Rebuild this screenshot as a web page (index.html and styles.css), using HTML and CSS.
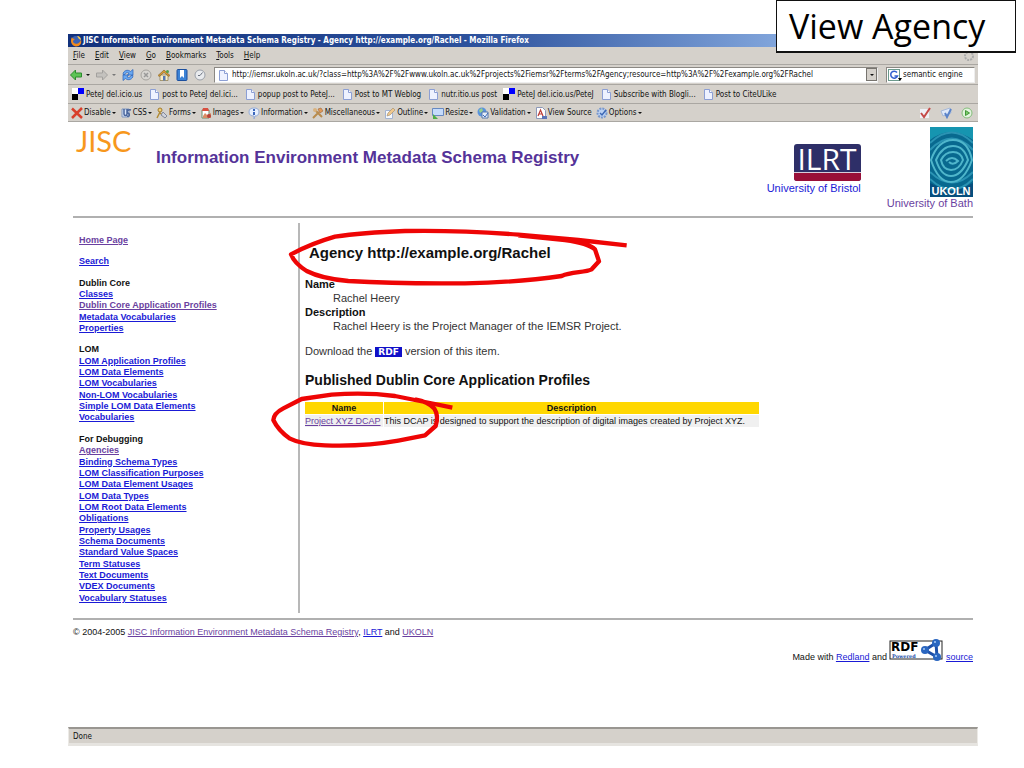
FILE: index.html
```html
<!DOCTYPE html>
<html lang="en">
<head>
  <meta charset="UTF-8" />
  <meta name="viewport" content="width=device-width, initial-scale=1" />
  <title>View Agency</title>
  <link rel="stylesheet" href="styles.css">
</head>
<body>

  <svg class="defs" aria-hidden="true">
    <symbol id="page" viewBox="0 0 12 12">
      <path d="M2.5 1.5h5l3 3v7h-8z" fill="#eef2ff" stroke="#8c9fd4"/>
      <path d="M7.5 1.5v3h3" fill="#fff" stroke="#8c9fd4"/>
    </symbol>
    <symbol id="delicious" viewBox="0 0 12 12">
      <path d="M0 0h6v6H0z" fill="#fff"/><path d="M6 0h6v6H6z" fill="#00f"/>
      <path d="M0 6h6v6H0z" fill="#000"/><path d="M6 6h6v6H6z" fill="#d5d1cb"/>
    </symbol>
  </svg>

  <div class="window">
    <div class="title-bar">
      <svg class="icon" viewBox="0 0 12 12"><circle cx="6" cy="6" r="5" fill="#3b62b5"/><path d="M2 2C0 5 1 11 6 11.500c4 0 6-3 5-7-1 3-3 5-6 4S3 5 5 4C3 4 2 3 2 2z" fill="#f28a1c"/><path d="M7 1c3 0 4 2 4 4L9 4z" fill="#f7c64a"/></svg>
      <span>JISC Information Environment Metadata Schema Registry - Agency http://example.org/Rachel - Mozilla Firefox</span>
    </div>

    <div class="menu-bar">
      <button type="button"><u>F</u>ile</button>
      <button type="button"><u>E</u>dit</button>
      <button type="button"><u>V</u>iew</button>
      <button type="button"><u>G</u>o</button>
      <button type="button"><u>B</u>ookmarks</button>
      <button type="button"><u>T</u>ools</button>
      <button type="button"><u>H</u>elp</button>
      <svg class="icon throbber" viewBox="0 0 12 12"><circle cx="6" cy="6" r="4" fill="none" stroke="#aaa" stroke-width="2" stroke-dasharray="2 1"/></svg>
    </div>

    <div class="nav-bar">
      <div class="nav-buttons">
        <button type="button" class="with-arrow" aria-label="Back"><svg class="icon" viewBox="0 0 12 12"><path d="M.5 6l5-5v3h6v4h-6v3z" fill="#5cc454" stroke="#2c8b2d"/></svg><i class="arrow"></i></button>
        <button type="button" class="with-arrow" aria-label="Forward"><svg class="icon" viewBox="0 0 12 12"><path d="M11.500 6l-5-5v3h-6v4h6v3z" fill="#c4c2be" stroke="#a3a19e"/></svg><i class="arrow dim"></i></button>
        <button type="button" aria-label="Reload"><svg class="icon" viewBox="0 0 12 12"><path d="M1 5.500C1 1.500 6 0 8.500 2.500L11 .5V6H5.500l1.500-2C5 3 3.500 4 3 5.500zM11 6.500c0 4-5 5.500-7.500 3L1 11.500V6h5.500L5 8c2 1 3.500 0 4-1.500z" fill="#6aa8f0" stroke="#2861ba" stroke-width=".7"/></svg></button>
        <button type="button" aria-label="Stop"><svg class="icon" viewBox="0 0 12 12"><circle cx="6" cy="6" r="5" fill="#d8d6d2" stroke="#a5a39f"/><path d="M4 4l4 4M8 4l-4 4" stroke="#999" stroke-width="1.500"/></svg></button>
        <button type="button" aria-label="Home"><svg class="icon" viewBox="0 0 12 12"><path d="M2 6v5.500h8V6z" fill="#f7edc9" stroke="#8b7a4a" stroke-width=".7"/><path d="M0 6.500L6 1l6 5.500-1 1-5-4-5 4z" fill="#d99c35" stroke="#7b5a20" stroke-width=".6"/><path d="M5 7h2.500v4.500H5z" fill="#5578b5"/><circle cx="9.500" cy="2.500" r="1.500" fill="#55a14c"/></svg></button>
        <button type="button" aria-label="Bookmarks"><svg class="icon" viewBox="0 0 12 12"><rect x="1" y=".5" width="10" height="11" rx="1" fill="#3c83d6" stroke="#1c4f9e"/><path d="M4 1h4v8L6 7 4 9z" fill="#fff"/></svg></button>
        <button type="button" aria-label="History"><svg class="icon" viewBox="0 0 12 12"><circle cx="6" cy="6" r="5" fill="#e9ebee" stroke="#9a9fa8"/><path d="M6 6.500L8.500 3.500M6 6.500H4" stroke="#6b7280" fill="none"/></svg></button>
      </div>
      <div class="address">
        <svg class="icon"><use href="#page"/></svg>
        <input type="text" aria-label="Address" value="http://iemsr.ukoln.ac.uk/?class=http%3A%2F%2Fwww.ukoln.ac.uk%2Fprojects%2Fiemsr%2Fterms%2FAgency;resource=http%3A%2F%2Fexample.org%2FRachel">
        <button type="button" class="drop" aria-label="Show history"><i class="arrow"></i></button>
      </div>
      <div class="search">
        <svg class="search-logo" viewBox="0 0 14 12"><rect x=".5" y=".5" width="11" height="11" fill="#fff" stroke="#6c9a8c"/><path d="M9 3.500A3.500 3.500 0 1 0 9.500 7H6.500" fill="none" stroke="#3460cf" stroke-width="1.500"/><path d="M10 9h4l-2 3z" fill="#000"/></svg>
        <input type="text" aria-label="Search" value="semantic engine">
      </div>
    </div>

    <div class="bookmark-bar">
      <a href="#"><svg class="icon"><use href="#delicious"/></svg>PeteJ del.icio.us</a>
      <a href="#"><svg class="icon"><use href="#page"/></svg>post to PeteJ del.ici...</a>
      <a href="#"><svg class="icon"><use href="#page"/></svg>popup post to PeteJ...</a>
      <a href="#"><svg class="icon"><use href="#page"/></svg>Post to MT Weblog</a>
      <a href="#"><svg class="icon"><use href="#page"/></svg>nutr.itio.us post</a>
      <a href="#"><svg class="icon"><use href="#delicious"/></svg>PeteJ del.icio.us/PeteJ</a>
      <a href="#"><svg class="icon"><use href="#page"/></svg>Subscribe with Blogli...</a>
      <a href="#"><svg class="icon"><use href="#page"/></svg>Post to CiteULike</a>
    </div>

    <div class="dev-bar">
      <button type="button"><svg class="icon" viewBox="0 0 12 12"><path d="M1 1.500l10 9.500M11 1L1 11" stroke="#d8402c" stroke-width="2.500"/></svg>Disable<i class="arrow"></i></button>
      <button type="button"><svg class="icon" viewBox="0 0 12 12"><path d="M2 2h7v8H2z" fill="#dbe6f8" stroke="#7d94bd"/><path d="M4 2v5c0 2 3 2 3 0V2M7 9c3 1 3-2 1-3s0-4 3-3" fill="none" stroke="#4a669c" stroke-width="1.500"/></svg>CSS<i class="arrow"></i></button>
      <button type="button"><svg class="icon" viewBox="0 0 12 12"><circle cx="4" cy="3" r="2" fill="#f2cf77" stroke="#a07a2d"/><path d="M4 5l-3 6M4 6l5 4" stroke="#b28b34" stroke-width="1.500"/><path d="M7 5l4 4-2 2-4-3z" fill="#cfd3dd" stroke="#84899a"/></svg>Forms<i class="arrow"></i></button>
      <button type="button"><svg class="icon" viewBox="0 0 12 12"><path d="M2 3h7v8H2z" fill="#fff" stroke="#6d8e6d"/><path d="M3 1h5l1 3H2z" fill="#d95040"/><path d="M3 9l2-3 2 2 4-2v5H3z" fill="#d98e65"/><circle cx="9" cy="9" r="2" fill="#b8423a"/></svg>Images<i class="arrow"></i></button>
      <button type="button"><svg class="icon" viewBox="0 0 12 12"><path d="M6 1c3 0 5 1 5 4S9 9 7 9l-1 3V9C3 9 1 8 1 5s2-4 5-4z" fill="#e6effd" stroke="#94abd6"/><path d="M6 2v2M6 5v3" stroke="#3c68bd" stroke-width="2"/></svg>Information<i class="arrow"></i></button>
      <button type="button"><svg class="icon" viewBox="0 0 12 12"><path d="M1 11l6-6M3 3l7 7" stroke="#b88b4d" stroke-width="2"/><path d="M6 2l3-1 2 3-3 2z" fill="#e29a58" stroke="#9c663a" stroke-width=".6"/><circle cx="3" cy="3" r="2" fill="#d8b380"/></svg>Miscellaneous<i class="arrow"></i></button>
      <button type="button"><svg class="icon" viewBox="0 0 12 12"><path d="M1.500 3.500h7v8h-7z" fill="#f5f8fd" stroke="#a2b3d1"/><path d="M3 9l1-3 5-5 2 2-5 5z" fill="#f0c88e" stroke="#a99372" stroke-width=".7"/></svg>Outline<i class="arrow"></i></button>
      <button type="button"><svg class="icon" viewBox="0 0 12 12"><path d="M.5 1.500h11v7H.5z" fill="#c5dbfb" stroke="#6789c1"/><path d="M1 12V7l5 5z" fill="#4dae46"/></svg>Resize<i class="arrow"></i></button>
      <button type="button"><svg class="icon" viewBox="0 0 12 12"><circle cx="5" cy="5" r="4.500" fill="#5a93dd"/><path d="M2 3l3-2 1 3-3 2z" fill="#9ad089"/><path d="M5 5h6v6H5z" fill="#e6edf9" stroke="#5979aa"/><path d="M6 8l2 2 3-4" stroke="#3b68b5" fill="none"/></svg>Validation<i class="arrow"></i></button>
      <button type="button"><svg class="icon" viewBox="0 0 12 12"><path d="M1.500.5h6l3 3v8h-9z" fill="#fff" stroke="#8b98b8"/><path d="M3 9l2.500-6L8 9M4 7h3" fill="none" stroke="#bb3c36" stroke-width="1.200"/><path d="M7 9h5v3H7z" fill="#5a74b8"/></svg>View Source</button>
      <button type="button"><svg class="icon" viewBox="0 0 12 12"><circle cx="6" cy="6" r="4.500" fill="#bcd2f3" stroke="#7897cc" stroke-width="2" stroke-dasharray="2 1"/><path d="M4 6l2 2 4-5" fill="none" stroke="#3c67b4" stroke-width="1.500"/></svg>Options<i class="arrow"></i></button>
      <span class="dev-status">
        <svg class="icon" viewBox="0 0 12 12"><path d="M1 2h9v9H1z" fill="#eef0f6"/><path d="M2 6l3 4 6-9" fill="none" stroke="#c44a48" stroke-width="2"/></svg>
        <svg class="icon" viewBox="0 0 12 12"><path d="M1 4l9-3 1 5-8 3z" fill="#dfe9f9" stroke="#a5b8d8"/><path d="M5 6l2 4 4-8" fill="none" stroke="#5b83c9" stroke-width="2"/></svg>
        <svg class="icon" viewBox="0 0 12 12"><circle cx="6" cy="6" r="5" fill="#e3f4df" stroke="#84bd7b"/><path d="M4.500 3.500l4 2.500-4 2.500z" fill="#7dce6e" stroke="#429738"/></svg>
      </span>
    </div>

    <div class="page">
      <header class="site-header">
        <div class="jisc">JISC</div>
        <h1>Information Environment Metadata Schema Registry</h1>
        <a class="partner bristol" href="#">
          <svg width="67" height="38" viewBox="0 0 67 38">
            <rect width="67" height="37" rx="3" fill="#2e2f68"/>
            <path d="M0 29h67v5q0 3-3 3H3q-3 0-3-3z" fill="#990f38"/>
            <path d="M0 28.500h67" stroke="#d8cddb"/>
            <text x="33" y="26" text-anchor="middle" class="ilrt-text">ILRT</text>
          </svg>
          University of Bristol
        </a>
        <a class="partner bath visited" href="#">
          <svg width="43" height="70" viewBox="0 0 43 70">
            <rect width="43" height="70" fill="#08698f"/>
            <path d="M0 0h43v13Q21-3 0 13z" fill="#1695b0"/>
            <path d="M0 56q22 12 43 0v14H0z" fill="#064e7d"/>
            <g fill="none" stroke="#4fb6cb" stroke-width="2">
              <path d="M0 16Q22-5 43 16M0 23Q22 0 43 23M0 45Q22 66 43 45M0 52Q22 73 43 52" stroke="#2a93b3"/>
              <path d="M1 33Q8 13 23 13t19 20Q34 55 21 55T1 33z"/>
              <path d="M6 33Q12 19 23 19t15 14Q31 49 21 49T6 33z"/>
              <path d="M11 33Q15 25 23 25t10 8Q29 43 21 43T11 33z"/>
              <path d="M16 34q6-6 12 0-5 5-9 1"/>
            </g>
            <text x="21" y="68" text-anchor="middle" class="ukoln-text">UKOLN</text>
          </svg>
          University of Bath
        </a>
      </header>

      <div class="layout">
        <nav class="sidebar">
          <ul>
            <li><a class="visited" href="#">Home Page</a></li>
            <li class="first"><a href="#">Search</a></li>
            <li class="first">Dublin Core</li>
            <li><a href="#">Classes</a></li>
            <li><a class="visited" href="#">Dublin Core Application Profiles</a></li>
            <li><a href="#">Metadata Vocabularies</a></li>
            <li><a href="#">Properties</a></li>
            <li class="first">LOM</li>
            <li><a href="#">LOM Application Profiles</a></li>
            <li><a href="#">LOM Data Elements</a></li>
            <li><a href="#">LOM Vocabularies</a></li>
            <li><a href="#">Non-LOM Vocabularies</a></li>
            <li><a href="#">Simple LOM Data Elements</a></li>
            <li><a href="#">Vocabularies</a></li>
            <li class="first">For Debugging</li>
            <li><a class="visited" href="#">Agencies</a></li>
            <li><a href="#">Binding Schema Types</a></li>
            <li><a href="#">LOM Classification Purposes</a></li>
            <li><a href="#">LOM Data Element Usages</a></li>
            <li><a href="#">LOM Data Types</a></li>
            <li><a href="#">LOM Root Data Elements</a></li>
            <li><a href="#">Obligations</a></li>
            <li><a href="#">Property Usages</a></li>
            <li><a href="#">Schema Documents</a></li>
            <li><a href="#">Standard Value Spaces</a></li>
            <li><a href="#">Term Statuses</a></li>
            <li><a href="#">Text Documents</a></li>
            <li><a href="#">VDEX Documents</a></li>
            <li><a href="#">Vocabulary Statuses</a></li>
          </ul>
        </nav>

        <main class="content">
          <h2>Agency http://example.org/Rachel</h2>
          <dl>
            <dt>Name</dt>
            <dd>Rachel Heery</dd>
            <dt>Description</dt>
            <dd>Rachel Heery is the Project Manager of the IEMSR Project.</dd>
          </dl>
          <p>Download the <a class="rdf-badge" href="#">RDF</a> version of this item.</p>
          <h3>Published Dublin Core Application Profiles</h3>
          <table>
            <thead>
              <tr><th class="name-col">Name</th><th>Description</th></tr>
            </thead>
            <tbody>
              <tr>
                <td><a class="visited" href="#">Project XYZ DCAP</a></td>
                <td>This DCAP is designed to support the description of digital images created by Project XYZ.</td>
              </tr>
            </tbody>
          </table>
        </main>

        <!-- hand drawn rings around the heading and the table link -->
        <svg class="rings" viewBox="0 0 1140 720" aria-hidden="true">
          <path d="M1085 76L940 60 760 44Q580 30 420 33 290 38 210 50 140 70 78 103 88 130 125 153 170 176 250 183 400 192 600 190 760 187 890 168C920 155 960 158 980 148L1002 124 990 88Q970 70 900 60L760 46"/>
          <path d="M562 563L480 546 390 528Q300 516 200 524L110 537 55 565Q26 580 25 600 40 632 75 656 110 674 180 676 300 680 400 662L480 646 512 618Q522 588 508 566 490 545 450 538"/>
        </svg>
      </div>

      <footer class="site-footer">
        <div>© 2004-2005 <a class="visited" href="#">JISC Information Environment Metadata Schema Registry</a>, <a href="#">ILRT</a> and <a class="visited" href="#">UKOLN</a></div>
        <div class="made-with">
          Made with <a href="#">Redland</a> and
          <svg width="54" height="24" viewBox="0 0 54 24">
            <rect x="1" y="3" width="52" height="18" fill="#fff" stroke="#222"/>
            <text x="2" y="13" class="rdf-text">RDF</text>
            <text x="3" y="20" class="powered-text">Powered</text>
            <path d="M47 5L36 12l12 7z" fill="none" stroke="#1d4fa8" stroke-width="3"/>
            <g fill="#2a66c0"><circle cx="47" cy="5" r="4"/><circle cx="36" cy="12" r="4"/><circle cx="48" cy="19" r="4"/></g>
            <g fill="#a9cdf7"><circle cx="46" cy="4" r="1"/><circle cx="35" cy="11" r="1"/><circle cx="47" cy="18" r="1"/></g>
          </svg>
          <a href="#">source</a>
        </div>
      </footer>
    </div>

    <div class="status-bar">Done</div>
  </div>

  <div class="slide-label">View Agency</div>

</body>
</html>
```
FILE: styles.css
```css
* {
  box-sizing: border-box;
  margin: 0;
  padding: 0;
}

body {
  font-family: "Liberation Sans", Arial, sans-serif;
  background: #fff;
  color: #111;
  padding: 34px 46px 22px 68px;
}

.defs {
  position: absolute;
  width: 0;
  height: 0;
}

a {
  color: #1a1ad6;
}

a.visited {
  color: #6a3fa0;
}

ul {
  list-style: none;
}

.icon {
  width: 12px;
  height: 12px;
  flex: none;
}

.arrow {
  border: 2px solid transparent;
  border-top-color: #111;
  border-bottom: 0;
}

.arrow.dim {
  border-top-color: #777;
}

/* browser window */
.window {
  background: #d5d1cb;
  font-size: 8px;
}

.window button,
.window input {
  font-family: "DejaVu Sans Condensed", "DejaVu Sans", sans-serif;
  font-size: 8px;
  border: none;
  background: none;
  color: #111;
}

.title-bar,
.menu-bar,
.nav-bar,
.bookmark-bar,
.dev-bar,
.status-bar {
  display: flex;
  align-items: center;
  white-space: nowrap;
  font-family: "DejaVu Sans Condensed", "DejaVu Sans", sans-serif;
}

.title-bar {
  height: 13px;
  padding-left: 2px;
  gap: 1px;
  background: linear-gradient(to right, #12317c, #2d529d 45%, #86aadf 80%, #a0c0ea);
  color: #fff;
  font-weight: bold;
}

.menu-bar {
  height: 17px;
  padding: 0 3px 0 5px;
  gap: 10px;
}

.throbber {
  margin-left: auto;
}

.nav-bar {
  height: 20px;
  padding: 0 3px 0 2px;
  gap: 8px;
  border-top: 1px solid #aaa7a2;
}

.nav-buttons {
  display: flex;
  align-items: center;
  gap: 6px;
}

.nav-buttons button {
  display: flex;
  align-items: center;
}

.with-arrow {
  gap: 4px;
}

.address,
.search {
  display: flex;
  align-items: center;
  height: 16px;
  background: #fff;
  border: 1px solid #8b8883;
  border-right-color: #eee;
  border-bottom-color: #eee;
}

.address {
  flex: 1;
  padding-left: 2px;
  gap: 3px;
}

.address input,
.search input {
  flex: 1;
  min-width: 0;
  outline: none;
}

.drop {
  width: 11px;
  height: 13px;
  display: flex;
  align-items: center;
  justify-content: center;
}

.window .drop {
  background: #d5d1cb;
  border: 1px solid #77746f;
}

.search {
  width: 89px;
  padding-left: 1px;
  gap: 1px;
}

.search-logo {
  width: 14px;
  height: 12px;
  flex: none;
}

.bookmark-bar {
  height: 19px;
  padding-left: 4px;
  gap: 6px;
  border-top: 1px solid #aaa7a2;
}

.bookmark-bar a {
  display: flex;
  align-items: center;
  gap: 2px;
  color: #111;
  text-decoration: none;
}

.dev-bar {
  height: 19px;
  padding: 0 5px 0 3px;
  gap: 4px;
  border-top: 1px solid #aaa7a2;
  border-bottom: 1px solid #aaa7a2;
}

.dev-bar button {
  display: flex;
  align-items: center;
  gap: 1px;
}

.dev-status {
  display: flex;
  gap: 9px;
  margin-left: auto;
}

.status-bar {
  height: 19px;
  padding-left: 4px;
  border: 1px solid #eceae6;
  border-top: 2px solid #999691;
  border-bottom: 3px solid #e6e4e0;
}

/* registry site */
.page {
  background: #fff;
  padding: 0 5px;
  min-height: 605px;
}

.site-header {
  display: flex;
  align-items: flex-start;
  height: 96px;
  border-bottom: 2px solid #b0b0b0;
}

.jisc {
  width: 83px;
  padding-left: 3px;
  font-family: Lato, sans-serif;
  font-size: 29px;
  line-height: 38px;
  color: #f7981d;
}

h1 {
  flex: 1;
  padding-top: 26px;
  font-size: 17px;
  line-height: 20px;
  color: #553399;
  white-space: nowrap;
}

.partner {
  display: flex;
  flex-direction: column;
  align-items: flex-end;
  font-size: 11px;
  line-height: 12px;
  text-decoration: none;
  white-space: nowrap;
}

.bristol {
  padding-top: 22px;
  margin-right: 26px;
}

.bath {
  padding-top: 5px;
}

.ilrt-text {
  font-family: "Open Sans", sans-serif;
  font-size: 30px;
  fill: #fff;
}

.ukoln-text {
  font-size: 11px;
  font-weight: bold;
  fill: #fff;
}

.layout {
  position: relative;
  display: flex;
  min-height: 390px;
  margin-top: 5px;
}

.sidebar {
  display: flex;
  width: 227px;
  padding: 12px 6px 9px;
  border-right: 2px solid #b8b8b8;
  font-size: 9px;
  font-weight: bold;
  line-height: 11px;
}

.sidebar ul {
  display: flex;
  flex-direction: column;
  justify-content: space-between;
}

.sidebar .first {
  padding-top: 10px;
}

.content {
  flex: 1;
  padding: 20px 5px 0;
  font-size: 11px;
  line-height: 14px;
}

h2 {
  margin: 0 0 14px 4px;
  font-size: 15px;
  line-height: 20px;
}

dt {
  font-weight: bold;
}

dd,
.content p {
  color: #333;
}

dd {
  margin-left: 28px;
}

.content p {
  margin: 11px 0 12px;
}

.rdf-badge {
  display: inline-block;
  padding: 0 3px;
  background: #1010c8;
  color: #fff;
  font: bold 9px/10px "DejaVu Sans", sans-serif;
  text-decoration: none;
}

h3 {
  margin-bottom: 11px;
  font-size: 14px;
  line-height: 20px;
}

table {
  width: 456px;
  border-spacing: 1px;
  margin-left: -1px;
  font-size: 9px;
  line-height: 12px;
  white-space: nowrap;
}

.name-col {
  width: 78px;
}

th {
  background: #ffd700;
}

td {
  background: #f0f0f0;
}

.rings {
  position: absolute;
  left: 192px;
  top: -3px;
  width: 380px;
  height: 240px;
  fill: none;
  stroke: #ee0505;
  stroke-width: 13;
  stroke-linejoin: round;
  pointer-events: none;
}

.site-footer {
  margin-top: 5px;
  padding-top: 6px;
  border-top: 2px solid #b0b0b0;
  font-size: 9px;
  line-height: 12px;
}

.made-with {
  text-align: right;
}

.made-with svg {
  vertical-align: -2px;
}

.rdf-text {
  font: bold 12px "DejaVu Sans", sans-serif;
}

.powered-text {
  font: bold 5px "DejaVu Serif", serif;
  fill: #1d4fa8;
}

/* caption of the slide, over the window corner */
.slide-label {
  position: absolute;
  top: 0;
  right: 8px;
  width: 240px;
  height: 53px;
  padding-left: 12px;
  border: 1px solid #111;
  border-bottom-width: 2px;
  background: #fff;
  color: #000;
  font-family: "Comic Sans MS", "Open Sans", sans-serif;
  font-size: 34px;
  line-height: 50px;
}
```
